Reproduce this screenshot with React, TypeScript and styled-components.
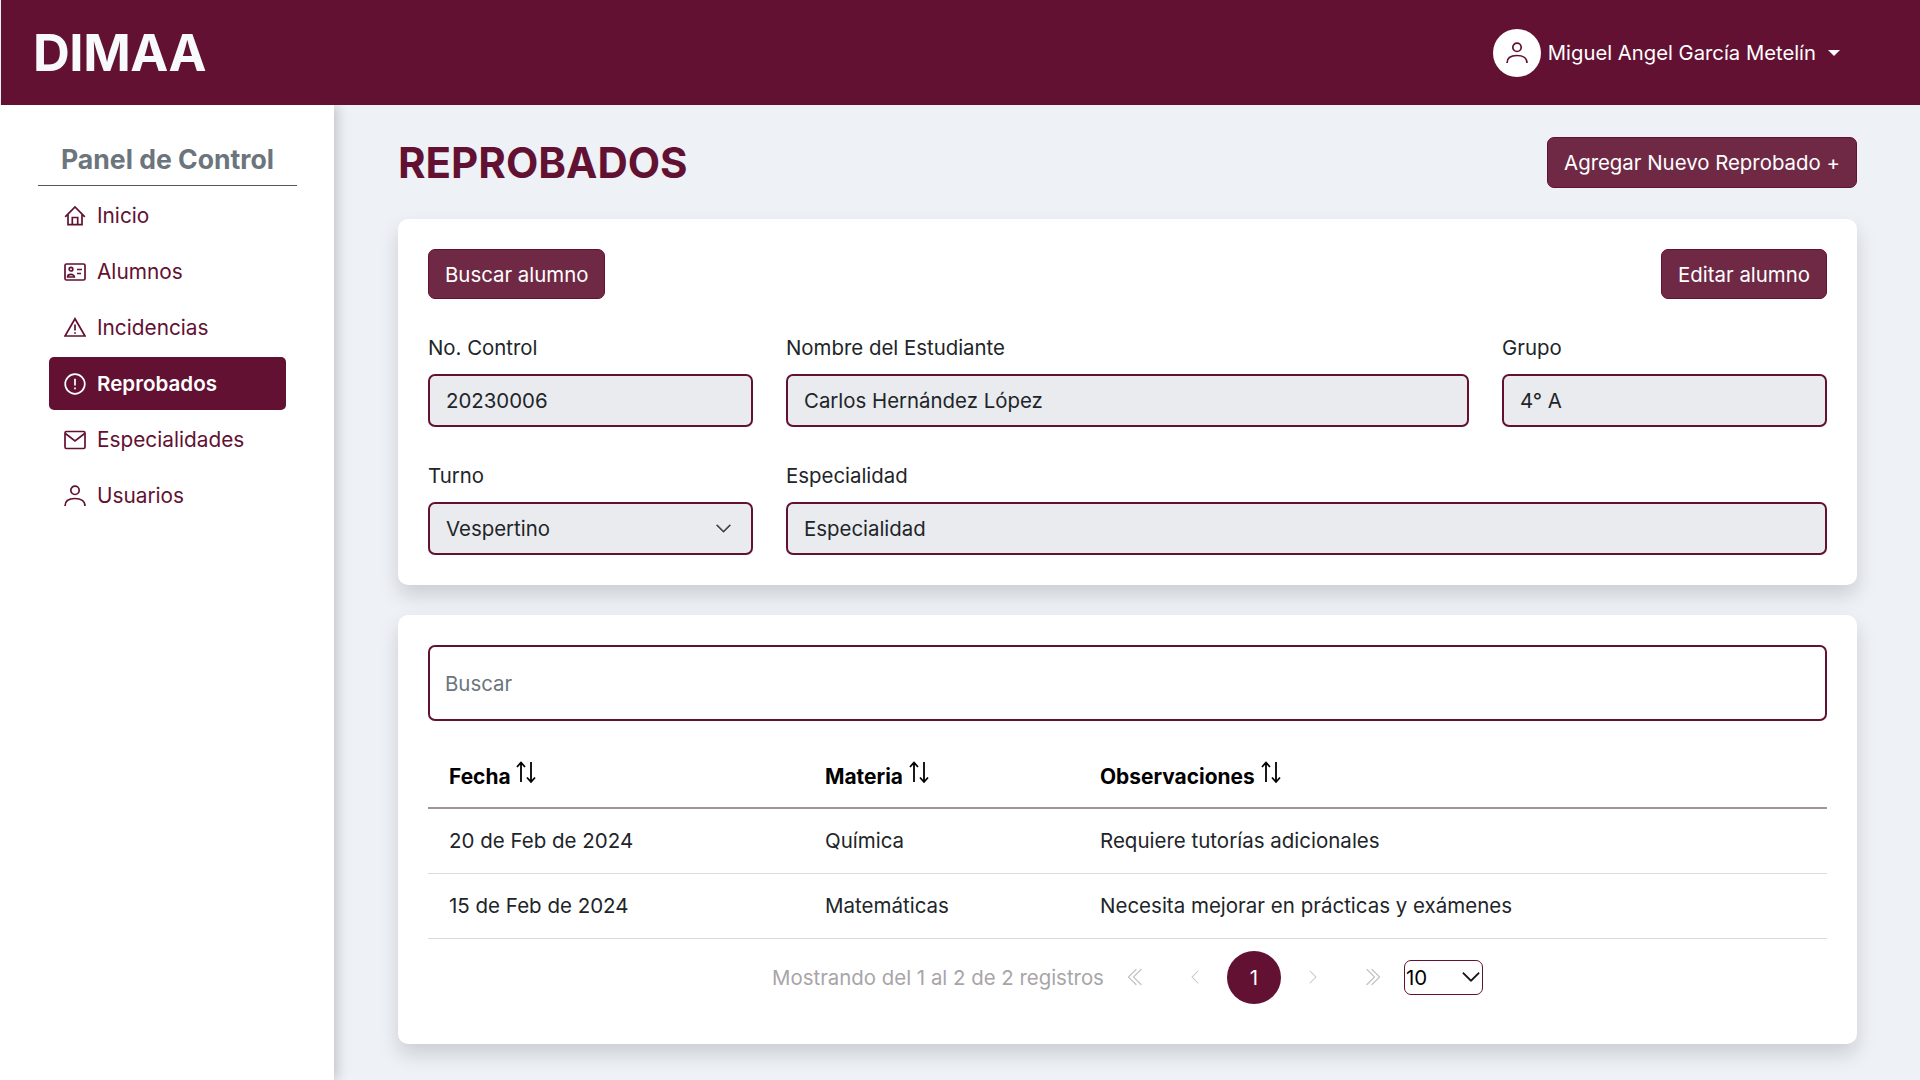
import type { ReactNode } from "react";
import styled, { createGlobalStyle } from "styled-components";
import {
  BsChevronDown,
  BsChevronLeft,
  BsChevronRight,
  BsChevronDoubleLeft,
  BsChevronDoubleRight,
} from "react-icons/bs";

const wine = "#621132";

const GlobalStyle = createGlobalStyle`
  html, body {
    margin: 0;
    padding: 0;
    background: #eef1f6;
    font-family: Inter, "Liberation Sans", sans-serif;
    color: #212529;
  }
  * {
    box-sizing: border-box;
  }
`;

const PersonGlyph = () => (
  <>
    <circle cx="11" cy="5.3" r="4.2" />
    <path d="M1 21c0-5 4-7.5 10-7.5s10 2.5 10 7.5" />
  </>
);

const menu: { label: string; icon: ReactNode; active?: boolean }[] = [
  {
    label: "Inicio",
    icon: (
      <>
        <path d="M1.2 11.8 11 2l9.8 9.8" />
        <path d="M4 9.5v10.2h14V9.5" />
        <path d="M8.3 19.7v-7.2h5.4v7.2" />
      </>
    ),
  },
  {
    label: "Alumnos",
    icon: (
      <>
        <rect x="1" y="3" width="20" height="16" rx="1.5" />
        <circle cx="7" cy="8.2" r="1.8" />
        <path d="M3.6 16c0-3.4 6.8-3.4 6.8 0z" />
        <path d="M13 8.5h5M13 12.5h4" />
      </>
    ),
  },
  {
    label: "Incidencias",
    icon: (
      <>
        <path d="M11 1.8 21 19H1z" />
        <path d="M11 7.5v6M11 15.2v1.6" />
      </>
    ),
  },
  {
    label: "Reprobados",
    active: true,
    icon: (
      <>
        <circle cx="11" cy="11" r="9.8" />
        <path d="M11 5.8v6.8M11 14.4v1.8" />
      </>
    ),
  },
  {
    label: "Especialidades",
    icon: (
      <>
        <rect x="1" y="2.5" width="20" height="17" rx="1.5" />
        <path d="M1.4 4.5 11 12l9.6-7.5" />
      </>
    ),
  },
  { label: "Usuarios", icon: <PersonGlyph /> },
];

const rows = [
  {
    fecha: "20 de Feb de 2024",
    materia: "Química",
    obs: "Requiere tutorías adicionales",
  },
  {
    fecha: "15 de Feb de 2024",
    materia: "Matemáticas",
    obs: "Necesita mejorar en prácticas y exámenes",
  },
];

const SortIcon = () => (
  <SortSvg viewBox="0 0 22 24" aria-hidden={true}>
    <path
      d="M6 22V3M2 7l4-4.5L10 7M16 2v19.5M12 17.5l4 4.5 4-4.5"
      fill="none"
      stroke="currentColor"
      strokeWidth="1.8"
    />
  </SortSvg>
);

const App = () => {
  return (
    <Page>
      <GlobalStyle />
      <TopBar>
        <Brand>DIMAA</Brand>
        <UserMenu>
          <Avatar>
            <NavIcon viewBox="0 0 22 22" aria-hidden={true}>
              <PersonGlyph />
            </NavIcon>
          </Avatar>
          <UserName>Miguel Angel García Metelín</UserName>
          <Caret />
        </UserMenu>
      </TopBar>

      <Body>
        <Sidebar>
          <SideTitle>Panel de Control</SideTitle>
          <Nav>
            {menu.map((item) => (
              <NavItem key={item.label} href="#" $active={item.active}>
                <NavIcon viewBox="0 0 22 22" aria-hidden={true}>
                  {item.icon}
                </NavIcon>
                {item.label}
              </NavItem>
            ))}
          </Nav>
        </Sidebar>

        <Main>
          <TitleRow>
            <Title>REPROBADOS</Title>
            <TallButton>Agregar Nuevo Reprobado +</TallButton>
          </TitleRow>

          <StudentCard>
            <ButtonRow>
              <Button>Buscar alumno</Button>
              <Button>Editar alumno</Button>
            </ButtonRow>
            <FieldGrid>
              <Field>
                <Label>No. Control</Label>
                <Input readOnly value="20230006" />
              </Field>
              <Field>
                <Label>Nombre del Estudiante</Label>
                <Input readOnly value="Carlos Hernández López" />
              </Field>
              <Field>
                <Label>Grupo</Label>
                <Input readOnly value="4° A" />
              </Field>
              <Field>
                <Label>Turno</Label>
                <SelectWrap>
                  <Input readOnly value="Vespertino" />
                  <SelectChevron size={17} />
                </SelectWrap>
              </Field>
              <Field $full>
                <Label>Especialidad</Label>
                <Input readOnly value="Especialidad" />
              </Field>
            </FieldGrid>
          </StudentCard>

          <TableCard>
            <SearchInput placeholder="Buscar" />
            <Table>
              <colgroup>
                <col width={376} />
                <col width={275} />
                <col />
              </colgroup>
              <thead>
                <tr>
                  <Th>
                    Fecha <SortIcon />
                  </Th>
                  <Th>
                    Materia <SortIcon />
                  </Th>
                  <Th>
                    Observaciones <SortIcon />
                  </Th>
                </tr>
              </thead>
              <tbody>
                {rows.map((row) => (
                  <tr key={row.fecha}>
                    <Td>{row.fecha}</Td>
                    <Td>{row.materia}</Td>
                    <Td>{row.obs}</Td>
                  </tr>
                ))}
              </tbody>
            </Table>
            <Pagination>
              <PageInfo>Mostrando del 1 al 2 de 2 registros</PageInfo>
              <PageGroup>
                <PageButton>
                  <BsChevronDoubleLeft size={20} />
                </PageButton>
                <PageButton>
                  <BsChevronLeft size={16} />
                </PageButton>
                <PageButton $current>1</PageButton>
                <PageButton>
                  <BsChevronRight size={16} />
                </PageButton>
                <PageButton>
                  <BsChevronDoubleRight size={20} />
                </PageButton>
              </PageGroup>
              <PageSizeWrap>
                <PageSize>10</PageSize>
                <BsChevronDown size={20} color="#111" strokeWidth={0.6} />
              </PageSizeWrap>
            </Pagination>
          </TableCard>
        </Main>
      </Body>
    </Page>
  );
};

export default App;

const Page = styled.div`
  height: 1080px;
  overflow: hidden;
  display: flex;
  flex-direction: column;
  background: #eef1f6;
`;

const TopBar = styled.header`
  height: 105px;
  flex-shrink: 0;
  margin-left: 1px;
  padding: 0 34px 0 32px;
  display: flex;
  align-items: center;
  justify-content: space-between;
  background: ${wine};
  color: #fff;
  position: relative;
  z-index: 2;
`;

const Brand = styled.div`
  font-size: 51px;
  font-weight: 700;
  letter-spacing: -0.5px;
  line-height: 1;
  color: #f8f9fa;
`;

const UserMenu = styled.div`
  display: flex;
  align-items: center;
  margin-right: 46px;
`;

const Avatar = styled.div`
  width: 48px;
  height: 48px;
  border-radius: 50%;
  background: #fff;
  color: ${wine};
  display: flex;
  align-items: center;
  justify-content: center;
`;

const UserName = styled.span`
  margin-left: 7px;
  font-size: 20.25px;
  line-height: 30px;
`;

const Caret = styled.span`
  margin-left: 12px;
  border-top: 6px solid #fff;
  border-left: 6px solid transparent;
  border-right: 6px solid transparent;
`;

const Body = styled.div`
  flex: 1;
  display: flex;
  min-height: 0;
`;

const Sidebar = styled.aside`
  width: 334px;
  flex-shrink: 0;
  background: #fff;
  box-shadow: 3px 0 12px rgba(0, 0, 0, 0.2);
  padding: 33px 37px 0 38px;
`;

const SideTitle = styled.h2`
  margin: 0;
  height: 48px;
  padding-top: 4px;
  border-bottom: 1px solid #555;
  text-align: center;
  font-size: 26.6px;
  font-weight: 700;
  line-height: 34px;
  color: #6c757d;
`;

const Nav = styled.nav`
  margin-top: 3px;
  display: flex;
  flex-direction: column;
  gap: 3px;
  padding: 0 11px;
`;

const NavItem = styled.a<{ $active?: boolean }>`
  height: 53px;
  display: flex;
  align-items: center;
  gap: 11px;
  padding: 0 15px;
  border-radius: 5px;
  text-decoration: none;
  font-size: ${(p) => (p.$active ? "20.6px" : "20.8px")};
  font-weight: ${(p) => (p.$active ? 600 : 400)};
  color: ${(p) => (p.$active ? "#fff" : wine)};
  background: ${(p) => (p.$active ? wine : "transparent")};
`;

const NavIcon = styled.svg`
  width: 22px;
  height: 22px;
  flex-shrink: 0;
  fill: none;
  stroke: currentColor;
  stroke-width: 1.7;
`;

const Main = styled.main`
  flex: 1;
  min-width: 0;
  padding: 32px 63px 0 64px;
`;

const TitleRow = styled.div`
  display: flex;
  align-items: center;
  justify-content: space-between;
  margin-bottom: 31px;
`;

const Title = styled.h1`
  margin: 0;
  font-size: 42px;
  font-weight: 700;
  line-height: 51px;
  color: ${wine};
`;

const Button = styled.button`
  height: 50px;
  padding: 1px 16px 0;
  border: 1px solid ${wine};
  border-radius: 7px;
  background: #702945;
  color: #fff;
  font-family: inherit;
  font-size: 20.4px;
  line-height: 30px;
`;

const TallButton = styled(Button)`
  height: 51px;
`;

const Card = styled.section`
  background: #fff;
  border-radius: 10px;
  padding: 30px;
  box-shadow: 0 10px 20px rgba(0, 0, 0, 0.15);
`;

const StudentCard = styled(Card)`
  height: 366px;
  margin-bottom: 30px;
`;

const TableCard = styled(Card)`
  height: 429px;
`;

const ButtonRow = styled.div`
  display: flex;
  justify-content: space-between;
  margin-bottom: 34px;
`;

const FieldGrid = styled.div`
  display: grid;
  grid-template-columns: 325px 1fr 325px;
  gap: 34px 33px;
`;

const Field = styled.div<{ $full?: boolean }>`
  min-width: 0;
  grid-column: ${(p) => (p.$full ? "2 / 4" : "auto")};
`;

const Label = styled.label`
  display: block;
  margin-bottom: 11px;
  font-size: 20.4px;
  line-height: 30px;
`;

const Input = styled.input`
  display: block;
  width: 100%;
  height: 53px;
  padding: 0 16px;
  border: 2.5px solid ${wine};
  border-radius: 7px;
  outline: none;
  background: #e9ebef;
  color: #212529;
  font-family: inherit;
  font-size: 20.4px;
`;

const SelectWrap = styled.div`
  position: relative;
`;

const SelectChevron = styled(BsChevronDown)`
  position: absolute;
  top: 18px;
  right: 21px;
  color: #343a40;
  stroke: currentColor;
  stroke-width: 0.6;
`;

const SearchInput = styled.input`
  display: block;
  width: 100%;
  height: 76px;
  padding: 0 15px;
  border: 2.5px solid ${wine};
  border-radius: 7px;
  outline: none;
  background: #fff;
  font-family: inherit;
  font-size: 20.4px;

  &::placeholder {
    color: #6c757d;
  }
`;

const Table = styled.table`
  width: 100%;
  margin-top: 21px;
  border-collapse: collapse;
  table-layout: fixed;
`;

const Th = styled.th`
  height: 66px;
  padding: 0 21px;
  text-align: left;
  font-size: 20.9px;
  font-weight: 700;
  color: #000;
  border-bottom: 2px solid #a39297;
`;

const SortSvg = styled.svg`
  width: 22px;
  height: 24px;
  vertical-align: 0;
`;

const Td = styled.td`
  height: 65px;
  padding: 0 21px;
  font-size: 20.5px;
  color: #212529;
  border-bottom: 1px solid #e3d8dc;
`;

const Pagination = styled.div`
  margin-top: 12px;
  display: flex;
  align-items: center;
  justify-content: center;
`;

const PageInfo = styled.span`
  font-size: 20.4px;
  color: #a8a4a8;
`;

const PageGroup = styled.div`
  display: flex;
  gap: 5px;
  margin: 0 5px;
`;

const PageButton = styled.div<{ $current?: boolean }>`
  width: 54px;
  height: 53px;
  border-radius: 50%;
  display: flex;
  align-items: center;
  justify-content: center;
  font-size: 20.4px;
  color: ${(p) => (p.$current ? "#fff" : "#c4c4c8")};
  background: ${(p) => (p.$current ? wine : "transparent")};
`;

const PageSizeWrap = styled.div`
  width: 79px;
  height: 35px;
  display: flex;
  align-items: center;
  justify-content: space-between;
  padding: 0 1px;
  border: 1px solid ${wine};
  border-radius: 7px;
  background: #fff;
`;

const PageSize = styled.span`
  font-size: 20.4px;
  color: #000;
`;
